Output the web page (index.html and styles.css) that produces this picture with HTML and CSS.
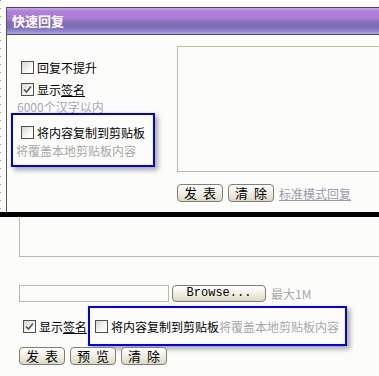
FILE: index.html
```html
<!DOCTYPE html>
<html lang="zh-CN">
<head>
    <meta charset="UTF-8">
    <title>快速回复</title>
    <link rel="stylesheet" href="styles.css">
</head>
<body>
    <div class="top">
        <div class="box">
            <div class="title">快速回复</div>
            <div class="content">
                <div class="side">
                    <label class="row"><span class="cb"></span>回复不提升</label>
                    <label class="row"><span class="cb checked"><svg viewBox="0 0 11 11" width="11" height="11"><path d="M2 5.5 L4.5 8 L9 2.5" fill="none" stroke="#555" stroke-width="1.6"/></svg></span>显示<a class="sig">签名</a></label>
                    <div class="limit">6000个汉字以内</div>
                    <div class="note">
                        <label class="row"><span class="cb"></span>将内容复制到剪贴板</label>
                        <div class="hint">将覆盖本地剪贴板内容</div>
                    </div>
                </div>
                <div class="main">
                    <div class="area"></div>
                    <div class="actions">
                        <button class="btn">发 表</button>
                        <button class="btn">清 除</button>
                        <a class="mode">标准模式回复</a>
                    </div>
                </div>
            </div>
        </div>
    </div>
    <div class="bar"></div>
    <div class="bottom">
        <div class="area2"></div>
        <div class="filerow">
            <span class="filebox"></span>
            <button class="browse">Browse...</button>
            <span class="max">最大1M</span>
        </div>
        <div class="optrow">
            <label class="row"><span class="cb checked"><svg viewBox="0 0 11 11" width="11" height="11"><path d="M2 5.5 L4.5 8 L9 2.5" fill="none" stroke="#555" stroke-width="1.6"/></svg></span>显示<a class="sig">签名</a></label>
            <div class="note2">
                <span class="cb"></span><span class="copy">将内容复制到剪贴板</span><span class="hint2">将覆盖本地剪贴板内容</span>
            </div>
        </div>
        <div class="actions2">
            <button class="btn">发 表</button>
            <button class="btn">预 览</button>
            <button class="btn">清 除</button>
        </div>
    </div>
</body>
</html>
```

FILE: styles.css
```css
body {
    margin: 0;
    background: #fcfdfb;
    font-family: "Noto Sans CJK SC", "Noto Sans", sans-serif;
    font-size: 12px;
    color: #000;
    overflow: hidden;
}

.top {
    height: 212px;
    box-sizing: border-box;
    padding: 7px 0 0 6px;
    overflow: hidden;
    background-image: repeating-linear-gradient(to bottom, #9a9a9a 0 1px, transparent 1px 8px);
    background-size: 1px 100%;
    background-repeat: no-repeat;
}

.box {
    border-left: 1px solid #555;
    height: 100%;
}

.title {
    height: 26px;
    line-height: 26px;
    border-top: 1px solid #4a4a58;
    border-bottom: 1px solid #4a4a58;
    padding-left: 5px;
    color: #fff;
    font-weight: bold;
    font-size: 13px;
    background: linear-gradient(to bottom, #c8a9ec 0, #ae82da 12%, #a87bd6 42%, #8470ba 52%, #7d6cb5 74%, #8d86d0 88%, #aaa9ee 100%);
}

.content {
    display: grid;
    grid-template-columns: 170px 1fr;
}

.side {
    padding: 21px 0 0 14px;
}

.row {
    display: flex;
    align-items: center;
    height: 22px;
    white-space: nowrap;
}

.cb {
    display: inline-flex;
    align-items: center;
    justify-content: center;
    width: 13px;
    height: 13px;
    box-sizing: border-box;
    border: 1px solid #505050;
    background: linear-gradient(135deg, #d8d8d0, #fbfbf8 70%);
    margin-right: 3px;
    flex: none;
}

.sig {
    text-decoration: underline;
    color: #000;
}

.limit {
    color: #a8a8a8;
    height: 13px;
    line-height: 13px;
    margin-left: -4px;
    white-space: nowrap;
}

.note {
    margin-left: -10px;
    width: 144px;
    height: 54px;
    box-sizing: border-box;
    border: 2px solid #0000f0;
    padding: 6px 0 0 8px;
    box-shadow: 3px 3px 5px rgba(0, 0, 0, 0.35);
}

.hint {
    color: #a8a8a8;
    line-height: 16px;
    margin-left: -5px;
    white-space: nowrap;
}

.area {
    margin-top: 11px;
    height: 126px;
    box-sizing: border-box;
    border: 1px solid #b8bba6;
    border-right: none;
}

.actions {
    display: flex;
    align-items: center;
    gap: 5px;
    margin-top: 12px;
}

.btn {
    width: 46px;
    height: 18px;
    padding: 0;
    border: 1px solid #7f7f72;
    border-radius: 4px;
    background: linear-gradient(to bottom, #ffffff 0, #f1efe4 50%, #dcd8c6 100%);
    font-family: "Noto Sans CJK SC", sans-serif;
    font-size: 13px;
    line-height: 16px;
    word-spacing: 3px;
    color: #000;
}

.mode {
    color: #9a9aa8;
    text-decoration: underline;
}

.bar {
    height: 5px;
    background: #000;
}

.bottom {
    padding-left: 19px;
}

.area2 {
    height: 40px;
    box-sizing: border-box;
    border-left: 1px solid #b8bba6;
    border-bottom: 1px solid #b8bba6;
}

.filerow {
    display: flex;
    align-items: center;
    margin-top: 27px;
    height: 18px;
}

.filebox {
    width: 150px;
    height: 17px;
    box-sizing: border-box;
    border: 1px solid #b8bba6;
}

.browse {
    margin-left: 3px;
    width: 94px;
    height: 17px;
    padding: 0;
    border: 1px solid #7f7f72;
    border-radius: 4px;
    background: linear-gradient(to bottom, #ffffff 0, #f1efe4 50%, #dcd8c6 100%);
    font-family: "Liberation Mono", monospace;
    font-size: 12px;
    line-height: 15px;
    color: #000;
}

.max {
    margin-left: 5px;
    color: #a8a8a8;
}

.optrow {
    display: flex;
    align-items: center;
    margin-top: 4px;
    padding-left: 4px;
}

.note2 {
    display: flex;
    align-items: center;
    margin-left: 1px;
    height: 40px;
    box-sizing: border-box;
    border: 2px solid #0000f0;
    padding: 0 6px 0 5px;
    box-shadow: 3px 3px 5px rgba(0, 0, 0, 0.35);
    white-space: nowrap;
}

.hint2 {
    color: #a8a8a8;
}

.actions2 {
    display: flex;
    gap: 5px;
    margin-top: 1px;
}
```
